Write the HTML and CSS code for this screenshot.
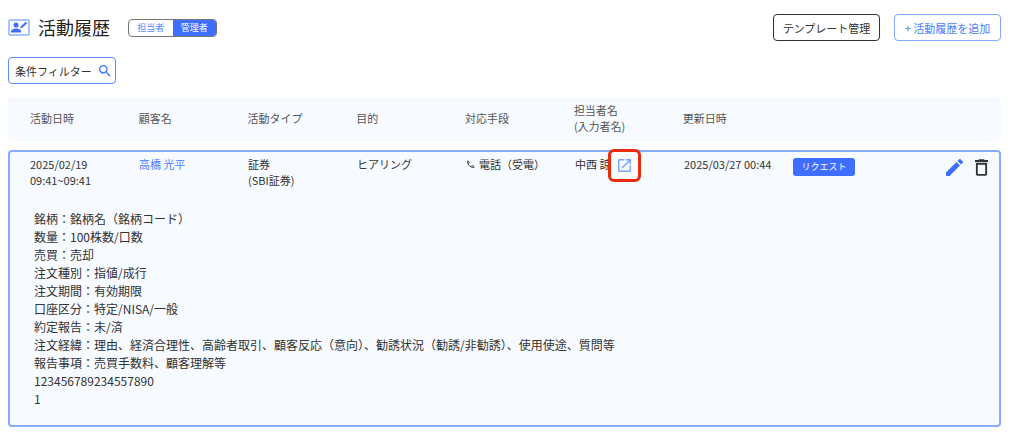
FILE: index.html
```html
<!DOCTYPE html>
<html lang="ja">
<head>
<meta charset="utf-8">
<meta name="viewport" content="width=device-width, initial-scale=1">
<title>活動履歴</title>
<link rel="stylesheet" href="styles.css">
</head>
<body>
<main class="page">
  <header class="page-header">
    <svg class="title-icon" viewBox="0 0 22 17" aria-hidden="true">
      <rect class="frame" x="1" y="1" width="20" height="15" rx="1"/>
      <circle cx="8" cy="6" r="2.5"/>
      <path d="M3 13.5v-1.2c0-2 3-2.9 5-2.9s5 .9 5 2.9v1.2z"/>
      <path d="M12.3 9.2l.4-1.8 5.2-4.6 1.3 1.4-5.1 4.7z"/>
    </svg>
    <h1 class="title">活動履歴</h1>
    <div class="toggle" role="group" aria-label="表示対象">
      <button class="toggle-item" type="button" aria-pressed="false">担当者</button>
      <button class="toggle-item selected" type="button" aria-pressed="true">管理者</button>
    </div>
    <div class="header-actions">
      <button class="button button-dark" type="button">テンプレート管理</button>
      <button class="button button-blue" type="button">+ 活動履歴を追加</button>
    </div>
  </header>

  <button class="filter" type="button">
    <span>条件フィルター</span>
    <svg class="search-icon" viewBox="3 3 18 18" aria-hidden="true"><path d="M15.5 14h-.79l-.28-.27A6.471 6.471 0 0 0 16 9.500 6.500 6.500 0 1 0 9.500 16c1.610 0 3.090-.59 4.230-1.570l.27.28v.79l5 4.990L20.490 19l-4.990-5zm-6 0C7.010 14 5 11.990 5 9.500S7.010 5 9.500 5 14 7.010 14 9.500 11.990 14 9.500 14z"/></svg>
  </button>

  <table class="history">
    <thead class="history-head">
      <tr class="row">
        <th>活動日時</th>
        <th>顧客名</th>
        <th>活動タイプ</th>
        <th>目的</th>
        <th>対応手段</th>
        <th>担当者名<br>(入力者名)</th>
        <th>更新日時</th>
        <td></td>
      </tr>
    </thead>
    <tbody class="card">
      <tr class="row">
        <td>2025/02/19<br>09:41~09:41</td>
        <td><a class="customer" href="#">高橋 光平</a></td>
        <td>証券<br>(SBI証券)</td>
        <td>ヒアリング</td>
        <td class="method">
          <svg class="phone-icon" viewBox="0 0 9 9" aria-hidden="true"><path d="M1.300 1.200C1.500 4.800 4.200 7.500 7.800 7.700V6.100L6.200 5.600 5.200 6.500"/><path d="M1.300 1.200H2.700L3.200 2.900 2.300 3.800"/></svg>
          <span>電話（受電）</span>
        </td>
        <td class="staff">
          中西 諒
          <button class="open-button" type="button" aria-label="別画面で開く">
            <svg class="open-icon" viewBox="3 3 18 18" aria-hidden="true"><path d="M19 19H5V5h7V3H5a2 2 0 0 0-2 2v14a2 2 0 0 0 2 2h14c1.100 0 2-.9 2-2v-7h-2v7zM14 3v2h3.590l-9.830 9.830 1.410 1.410L19 6.410V10h2V3h-7z"/></svg>
          </button>
        </td>
        <td>2025/03/27 00:44</td>
        <td class="operations">
          <button class="request" type="button">リクエスト</button>
          <div class="row-actions">
            <button class="icon-button" type="button" aria-label="編集">
              <svg class="edit-icon" viewBox="3 3 18 18" aria-hidden="true"><path d="M3 17.250V21h3.750L17.810 9.940l-3.750-3.750L3 17.250zM20.710 7.040a1 1 0 0 0 0-1.410l-2.340-2.340a1 1 0 0 0-1.410 0l-1.830 1.830 3.750 3.750 1.830-1.830z"/></svg>
            </button>
            <button class="icon-button" type="button" aria-label="削除">
              <svg class="delete-icon" viewBox="5 3 14 18" aria-hidden="true"><path d="M6 19c0 1.100.9 2 2 2h8c1.100 0 2-.9 2-2V7H6v12zM8 9h8v10H8V9zm7.500-5l-1-1h-5l-1 1H5v2h14V4h-3.500z"/></svg>
            </button>
          </div>
        </td>
      </tr>
      <tr class="memo-row">
        <td class="memo" colspan="8">銘柄：銘柄名（銘柄コード）<br>
数量：100株数/口数<br>
売買：売却<br>
注文種別：指値/成行<br>
注文期間：有効期限<br>
口座区分：特定/NISA/一般<br>
約定報告：未/済<br>
注文経緯：理由、経済合理性、高齢者取引、顧客反応（意向）、勧誘状況（勧誘/非勧誘）、使用使途、質問等<br>
報告事項：売買手数料、顧客理解等<br>
123456789234557890<br>
1</td>
      </tr>
    </tbody>
  </table>
</main>
</body>
</html>
```
FILE: styles.css
```css
* {
  box-sizing: border-box;
}

body {
  margin: 0;
  background: #fff;
  color: #333;
  font-family: "Noto Sans CJK JP", sans-serif;
  font-size: 11px;
  line-height: 16px;
}

button {
  padding: 0;
  border: 0;
  background: none;
  color: inherit;
  font: inherit;
  cursor: pointer;
}

svg {
  display: block;
  flex: none;
  fill: currentColor;
}

.page {
  padding: 14px 9px 12px 8px;
}

.page-header {
  display: flex;
  align-items: center;
  margin-bottom: 16px;
}

.title-icon {
  width: 22px;
  height: 17px;
  color: #3d6eff;
}

.title-icon .frame {
  fill: none;
  stroke: #8db0ff;
  stroke-width: 1.5;
}

.title {
  margin: 0 18px 0 8px;
  color: #222;
  font-size: 18px;
  font-weight: 400;
  line-height: 27px;
}

.toggle {
  display: flex;
  width: 89px;
  height: 18px;
  border: 1px solid #777;
  border-radius: 4px;
  overflow: hidden;
}

.toggle-item {
  flex: 1;
  color: #5b8bff;
  font-size: 9px;
  line-height: 16px;
}

.toggle-item.selected {
  background: #3d6eff;
  color: #fff;
}

.header-actions {
  display: flex;
  gap: 14px;
  margin-left: auto;
}

.button {
  min-width: 107px;
  height: 27px;
  padding: 0 8px;
  border: 1px solid #333;
  border-radius: 4px;
}

.button-blue {
  border-color: #82a9ff;
  color: #4a7dff;
}

.filter {
  display: flex;
  align-items: center;
  gap: 7px;
  height: 27px;
  margin-bottom: 13px;
  padding: 0 4px 0 6px;
  border: 1px solid #5b8cff;
  border-radius: 4px;
}

.search-icon {
  width: 12px;
  height: 12px;
  color: #3d76ff;
}

.history,
.history-head,
.card,
.memo-row,
.memo {
  display: block;
}

.row {
  display: grid;
  grid-template-columns: repeat(7, 109fr) 206fr;
}

th,
td {
  min-width: 0;
  padding: 0;
  text-align: left;
}

.history-head {
  margin-bottom: 9px;
  padding: 5px 4px 7px 22px;
  border-radius: 3px;
  background: #f7faff;
  color: #555;
}

.history-head .row {
  align-items: center;
}

.history-head th {
  font-weight: 400;
}

.card {
  padding: 4px 0 17px 20px;
  border: 2px solid #86acff;
  border-radius: 4px;
  background: #f7faff;
}

.customer {
  color: #4a7dff;
  text-decoration: none;
}

.method {
  display: flex;
  gap: 4px;
}

.phone-icon {
  width: 9px;
  height: 9px;
  margin-top: 4px;
  fill: none;
  stroke: #444;
}

.staff {
  position: relative;
  white-space: nowrap;
}

/* Highlighted control, laid over the end of the staff name */
.open-button {
  position: absolute;
  top: -7px;
  left: 33px;
  display: grid;
  place-items: center;
  width: 33px;
  height: 33px;
  border: 3px solid #ea2a0c;
  border-radius: 6px;
  background: #f7faff;
}

.open-icon {
  width: 13px;
  height: 13px;
  color: #7ba4ff;
}

.operations {
  display: flex;
  align-items: center;
  align-self: start;
  justify-content: space-between;
  padding: 2px 11px 0 0;
}

.request {
  width: 62px;
  height: 18px;
  border-radius: 3px;
  background: #3d6eff;
  color: #fff;
  font-size: 9px;
}

.row-actions {
  display: flex;
  align-items: center;
  gap: 12px;
}

.edit-icon {
  width: 17px;
  height: 17px;
  color: #3d6eff;
}

.delete-icon {
  width: 13px;
  height: 17px;
  color: #333;
}

.memo {
  padding: 22px 16px 0 4px;
  font-size: 12px;
  line-height: 18px;
}
```
